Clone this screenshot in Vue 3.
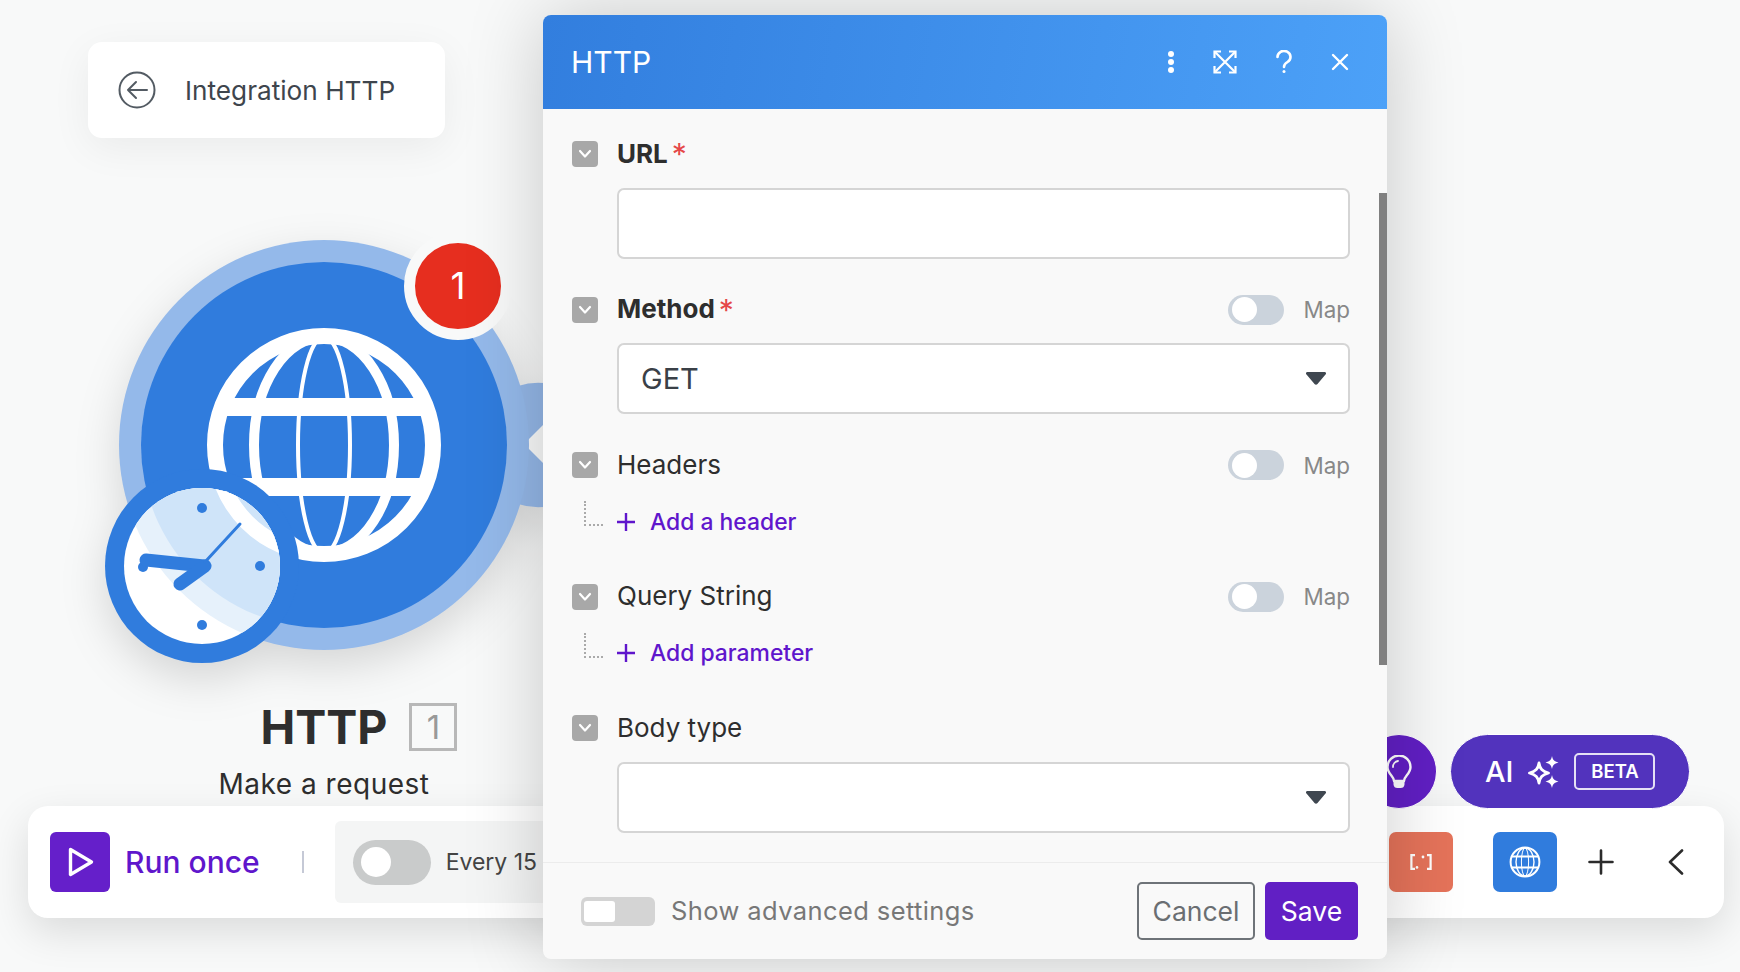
<script setup>
const fields = [
  { name: "URL", required: true, control: "input" },
  { name: "Method", required: true, map: true, control: "select", value: "GET" },
  { name: "Headers", map: true, add: "Add a header" },
  { name: "Query String", map: true, add: "Add parameter" },
  { name: "Body type", control: "select", value: "" },
];
</script>

<template>
  <div class="stage">
    <!-- canvas side -->
    <div class="back-card">
      <svg class="back-icon" width="38" height="38" viewBox="0 0 38 38" fill="none" stroke="#535b63" stroke-width="2">
        <circle cx="19" cy="19" r="17.5" />
        <path d="M29 19H10M18 11l-8 8 8 8" stroke-linecap="round" stroke-linejoin="round" />
      </svg>
      <span>Integration HTTP</span>
    </div>

    <div class="node">
      <div class="node-art">
        <svg width="456" height="450" viewBox="95 230 456 450">
          <defs>
            <g id="globe" fill="none" stroke="#fff">
              <circle cx="324" cy="445" r="109" stroke-width="16" />
              <ellipse cx="324" cy="445" rx="26" ry="108" stroke-width="4" />
              <ellipse cx="324" cy="445" rx="70" ry="108" stroke-width="10" />
              <rect x="224" y="398" width="200" height="18" fill="#fff" stroke="none" />
              <rect x="224" y="478" width="200" height="18" fill="#fff" stroke="none" />
            </g>
            <clipPath id="face">
              <circle cx="202" cy="566" r="78" />
            </clipPath>
          </defs>
          <path d="M518 386a64 64 0 0 1 40 0v118a64 64 0 0 1-40 0z" fill="#93b6e6" />
          <path d="M524 444l24-24v48z" fill="#f8f9f9" />
          <circle cx="324" cy="445" r="205" fill="#94b9ea" />
          <circle cx="324" cy="445" r="183" fill="#307cdd" />
          <use href="#globe" />
          <circle cx="202" cy="566" r="97" fill="#307cdd" />
          <circle cx="202" cy="566" r="78" fill="#fff" />
          <g clip-path="url(#face)">
            <circle cx="324" cy="445" r="205" fill="#e6f1fb" />
            <circle cx="324" cy="445" r="183" fill="#cfe4f9" />
            <use href="#globe" />
          </g>
          <g fill="#307cdd">
            <circle cx="202" cy="508" r="5" />
            <circle cx="260" cy="566" r="5" />
            <circle cx="202" cy="625" r="5" />
            <circle cx="143" cy="567" r="5" />
          </g>
          <g fill="none" stroke="#307cdd" stroke-linecap="round">
            <path d="M146 560L204 566" stroke-width="13" />
            <path d="M180 584L205 566" stroke-width="13" />
            <path d="M205 562L240 524" stroke-width="3" />
          </g>
        </svg>
        <div class="badge">1</div>
      </div>
      <div class="node-title">
        <span class="node-name">HTTP</span>
        <span class="node-id">1</span>
      </div>
      <div class="node-sub">Make a request</div>
    </div>

    <div class="bar">
      <div class="play">
        <svg width="26" height="30" viewBox="0 0 26 30" fill="none" stroke="#fff" stroke-width="3.4" stroke-linejoin="round">
          <path d="M2.500 2.500L23.500 15 2.500 27.500z" />
        </svg>
      </div>
      <span class="run-once">Run once</span>
      <i class="bar-divider"></i>
      <div class="schedule">
        <span class="schedule-toggle"><i></i></span>
        <span>Every 15</span>
      </div>
      <div class="bar-right">
        <div class="square orange">
          <svg width="22" height="16" viewBox="0 0 22 16" fill="none" stroke="#fff" stroke-width="2.2">
            <path d="M5 1.200H1.400v13.600H5M17 1.200h3.600v13.600H17" />
            <circle cx="7" cy="13.400" r="1.300" fill="#fff" stroke="none" />
            <circle cx="13" cy="3" r="1.400" fill="#fff" stroke="none" />
          </svg>
        </div>
        <div class="square blue">
          <svg width="32" height="32" viewBox="0 0 32 32" fill="none" stroke="#fff">
            <circle cx="16" cy="16" r="14.400" stroke-width="2" />
            <ellipse cx="16" cy="16" rx="3.600" ry="14" stroke-width="1" />
            <ellipse cx="16" cy="16" rx="9" ry="14" stroke-width="1.400" />
            <path d="M3 10.500h26M3 21.500h26" stroke-width="2" />
          </svg>
        </div>
        <svg class="plus" width="26" height="26" viewBox="0 0 26 26" fill="none" stroke="#2b2b2b" stroke-width="2.6" stroke-linecap="round">
          <path d="M13 1.500v23M1.500 13h23" />
        </svg>
        <svg class="chevron" width="16" height="26" viewBox="0 0 16 26" fill="none" stroke="#2b2b2b" stroke-width="2.6" stroke-linecap="round" stroke-linejoin="round">
          <path d="M14 1.500L2 13l12 11.500" />
        </svg>
      </div>
    </div>

    <!-- floating buttons above the bar -->
    <div class="tip">
      <svg width="26" height="34" viewBox="0 0 26 34" fill="none" stroke="#fff" stroke-width="2.4" stroke-linejoin="round">
        <path d="M8 26c0-5-6.500-7-6.500-14a11.500 11.500 0 0 1 23 0c0 7-6.500 9-6.500 14z" />
        <path d="M7 12a6 6 0 0 1 5-6" stroke-width="1.8" stroke-linecap="round" />
        <path d="M7.500 27h11v2.500a4 4 0 0 1-4 3.500h-3a4 4 0 0 1-4-3.500z" fill="#fff" stroke="none" />
      </svg>
    </div>
    <div class="ai">
      <span class="ai-text">AI</span>
      <svg width="32" height="32" viewBox="0 0 32 32" fill="#fff">
        <path d="M12 7C13 13 15 15 21.500 17 15 19 13 21 12 27 11 21 9 19 2.500 17 9 15 11 13 12 7z" fill="none" stroke="#fff" stroke-width="2.800" stroke-linejoin="round" />
        <path d="M25 0c.7 3.800 2.200 5.300 6.500 6.500-4.300 1.200-5.800 2.700-6.500 6.500-.7-3.800-2.200-5.300-6.500-6.500 4.300-1.200 5.800-2.700 6.500-6.500z" />
        <path d="M25 19c.7 3.800 2.200 5.300 6.500 6.500-4.300 1.200-5.800 2.700-6.500 6.500-.7-3.800-2.200-5.300-6.500-6.500 4.300-1.200 5.800-2.700 6.500-6.500z" />
      </svg>
      <span class="beta">BETA</span>
    </div>

    <!-- module settings dialog -->
    <div class="dialog">
      <div class="dialog-head">
        <span class="dialog-title">HTTP</span>
        <div class="head-icons">
          <svg class="head-dots" width="8" height="24" viewBox="0 0 8 24" fill="#fff">
            <circle cx="4" cy="4" r="3" />
            <circle cx="4" cy="12" r="3" />
            <circle cx="4" cy="20" r="3" />
          </svg>
          <svg width="24" height="24" viewBox="0 0 24 24" fill="none" stroke="#fff" stroke-width="2.200">
            <path d="M1.500 8V1.500H8M16 1.500h6.500V8M22.500 16v6.500H16M8 22.500H1.500V16" />
            <path d="M2 2l20 20M22 2L2 22" />
          </svg>
          <svg width="16" height="24" viewBox="0 0 16 24" fill="none" stroke="#fff" stroke-width="2.600" stroke-linecap="round">
            <path d="M1.500 7a6.500 6 0 1 1 10 5c-2.500 1.500-3.500 2.500-3.500 5" />
            <circle cx="8" cy="21.500" r="1.500" fill="#fff" stroke="none" />
          </svg>
          <svg width="18" height="18" viewBox="0 0 18 18" fill="none" stroke="#fff" stroke-width="2.400" stroke-linecap="round">
            <path d="M2 2l14 14M16 2L2 16" />
          </svg>
        </div>
      </div>

      <div class="dialog-body">
        <div v-for="field in fields" :key="field.name" class="field" :class="{ 'has-add': field.add }">
          <div class="field-row">
            <span class="check">
              <svg width="14" height="10" viewBox="0 0 14 10" fill="none" stroke="#fff" stroke-width="2.200" stroke-linecap="round" stroke-linejoin="round">
                <path d="M2 2l5 5.500L12 2" />
              </svg>
            </span>
            <label :class="{ strong: field.required }">{{ field.name }}</label>
            <span v-if="field.required" class="star">*</span>
            <div v-if="field.map" class="map">
              <span class="map-toggle"><i></i></span>
              <span>Map</span>
            </div>
          </div>
          <div v-if="field.control" class="control">
            <span v-if="field.value" class="control-value">{{ field.value }}</span>
            <svg v-if="field.control === 'select'" class="caret" width="20" height="13" viewBox="0 0 20 13" fill="#3f4750">
              <path d="M2 0h16c2 0 2.600 1.300 1.500 2.600L11.500 12c-.8 1-2.200 1-3 0L.5 2.600C-.6 1.300 0 0 2 0z" />
            </svg>
          </div>
          <div v-if="field.add" class="add-row">
            <i class="connector"></i>
            <svg width="18" height="18" viewBox="0 0 18 18" fill="none" stroke="#5f16cc" stroke-width="2.400">
              <path d="M9 0v18M0 9h18" />
            </svg>
            <span class="add-text">{{ field.add }}</span>
          </div>
        </div>
        <i class="scrollbar"></i>
      </div>

      <div class="dialog-foot">
        <span class="adv-toggle"><i></i></span>
        <span class="adv-label">Show advanced settings</span>
        <button class="btn cancel">Cancel</button>
        <button class="btn save">Save</button>
      </div>
    </div>
  </div>
</template>

<style>
html,
body {
  margin: 0;
  background: #f8f9f9;
}
</style>

<style scoped>
.stage {
  position: relative;
  width: 1740px;
  height: 972px;
  box-sizing: border-box;
  padding: 42px 16px 0 28px;
  overflow: hidden;
  background: #f8f9f9;
  font-family: Inter, "Liberation Sans", sans-serif;
  color: #2e2e2e;
}

.back-card {
  display: flex;
  align-items: center;
  box-sizing: border-box;
  width: 357px;
  height: 96px;
  margin-left: 60px;
  padding-left: 30px;
  background: #fff;
  border-radius: 14px;
  box-shadow: 0 10px 40px rgba(0, 0, 0, 0.06);
  font-size: 26.200px;
  color: #3e454d;
}
.back-icon {
  margin-right: 29px;
}

.node {
  width: 456px;
  margin: 92px 0 0 67px;
  text-align: center;
}
.node-art {
  position: relative;
  height: 450px;
}
.node-art svg {
  display: block;
  filter: drop-shadow(0 16px 22px rgba(0, 0, 0, 0.14));
}
.badge {
  position: absolute;
  left: 309px;
  top: 2px;
  width: 86px;
  height: 86px;
  border: 11px solid #f8f9f9;
  border-radius: 50%;
  background: #e62e1f;
  color: #fff;
  font-size: 37px;
  line-height: 86px;
}
.node-title {
  display: flex;
  justify-content: center;
  align-items: center;
  gap: 22px;
  height: 50px;
  margin-top: 22px;
  padding-left: 72px;
}
.node-name {
  font-size: 46.500px;
  font-weight: 700;
  line-height: 50px;
}
.node-id {
  box-sizing: border-box;
  width: 48px;
  height: 48px;
  border: 3px solid #b8b8b8;
  color: #999;
  font-size: 33px;
  line-height: 42px;
}
.node-sub {
  margin-top: 14px;
  padding-left: 2px;
  font-size: 28px;
  line-height: 36px;
  letter-spacing: 0.5px;
}

.bar {
  position: absolute;
  left: 28px;
  top: 806px;
  display: flex;
  align-items: center;
  box-sizing: border-box;
  width: 1696px;
  height: 112px;
  padding: 0 40px 0 22px;
  background: #fff;
  border-radius: 20px;
  box-shadow: 0 14px 40px rgba(0, 0, 0, 0.12);
}
.play {
  display: flex;
  align-items: center;
  justify-content: center;
  width: 60px;
  height: 60px;
  padding-left: 2px;
  box-sizing: border-box;
  background: #651fca;
  border-radius: 6px;
}
.run-once {
  margin-left: 15px;
  font-size: 30px;
  font-weight: 500;
  color: #5f16cc;
}
.bar-divider {
  width: 2px;
  height: 22px;
  margin: 0 31px 0 42px;
  background: #c5c9d6;
}
.schedule {
  display: flex;
  align-items: center;
  box-sizing: border-box;
  width: 240px;
  height: 82px;
  padding-left: 18px;
  background: #f4f5f5;
  border-radius: 6px;
  font-size: 23px;
  color: #444;
}
.schedule-toggle {
  display: flex;
  align-items: center;
  box-sizing: border-box;
  width: 78px;
  height: 45px;
  margin-right: 15px;
  padding-left: 8px;
  background: #c9cbcb;
  border-radius: 23px;
}
.schedule-toggle i {
  width: 30px;
  height: 30px;
  background: #fff;
  border-radius: 50%;
}
.bar-right {
  display: flex;
  align-items: center;
  margin-left: auto;
}
.square {
  display: flex;
  align-items: center;
  justify-content: center;
  width: 64px;
  height: 60px;
  border-radius: 7px;
}
.orange {
  background: #e5735a;
}
.blue {
  margin-left: 40px;
  background: #307cdd;
}
.plus {
  margin-left: 31px;
}
.chevron {
  margin-left: 54px;
}

.tip {
  position: absolute;
  left: 1361px;
  top: 734px;
  display: flex;
  align-items: center;
  justify-content: center;
  box-sizing: border-box;
  width: 76px;
  height: 75px;
  background: #611fc4;
  border: 1px solid #fff;
  border-radius: 50%;
}
.ai {
  position: absolute;
  left: 1450px;
  top: 734px;
  display: flex;
  align-items: center;
  box-sizing: border-box;
  width: 240px;
  height: 75px;
  padding-left: 34px;
  background: #5233bd;
  border: 1px solid #fff;
  border-radius: 38px;
  color: #fff;
}
.ai-text {
  margin-right: 14px;
  font-size: 29px;
  font-weight: 500;
}
.beta {
  box-sizing: border-box;
  width: 81px;
  height: 37px;
  margin-left: 15px;
  border: 2px solid rgba(255, 255, 255, 0.85);
  border-radius: 5px;
  font-size: 18.500px;
  font-weight: 600;
  line-height: 33px;
  text-align: center;
}

.dialog {
  position: absolute;
  left: 543px;
  top: 15px;
  display: flex;
  flex-direction: column;
  width: 844px;
  height: 944px;
  background: #f9f9f9;
  border-radius: 8px;
  box-shadow: 0 0 80px rgba(0, 0, 0, 0.2);
  overflow: hidden;
}
.dialog-head {
  flex: none;
  display: flex;
  align-items: center;
  justify-content: space-between;
  box-sizing: border-box;
  height: 94px;
  padding: 0 38px 0 28px;
  background: linear-gradient(100deg, #327ede, #4ca1f8);
  color: #fff;
}
.dialog-title {
  font-size: 30px;
}
.head-icons {
  display: flex;
  align-items: center;
  gap: 39px;
}
.head-icons svg {
  display: block;
}
.head-dots {
  margin-right: -1px;
}

.dialog-body {
  position: relative;
  flex: 1;
  min-height: 0;
  padding: 30px 37px 0 29px;
}
.field {
  margin-bottom: 36px;
}
.field.has-add {
  margin-bottom: 45px;
}
.field-row {
  display: flex;
  align-items: center;
  height: 30px;
  font-size: 26px;
}
.field-row label {
  margin-top: -2px;
}
.check {
  display: flex;
  align-items: center;
  justify-content: center;
  width: 26px;
  height: 26px;
  margin-right: 19px;
  background: #a8a8a8;
  border-radius: 4px;
}
.strong {
  font-weight: 700;
  font-size: 26px;
}
.star {
  margin: 0 0 0 4px;
  color: #e54848;
  font-size: 30px;
  line-height: 30px;
}
.map {
  display: flex;
  align-items: center;
  margin-left: auto;
  color: #888;
  font-size: 22.400px;
}
.map-toggle {
  display: flex;
  align-items: center;
  box-sizing: border-box;
  width: 56px;
  height: 30px;
  margin-right: 19px;
  padding-left: 4px;
  background: #cbd3dc;
  border-radius: 15px;
}
.map-toggle i {
  width: 25px;
  height: 25px;
  background: #fff;
  border-radius: 50%;
}
.control {
  display: flex;
  align-items: center;
  justify-content: space-between;
  box-sizing: border-box;
  height: 71px;
  margin: 18.500px 0 0 45px;
  padding: 0 22px 0 22px;
  background: #fff;
  border: 2px solid #d5d5d5;
  border-radius: 7px;
  font-size: 29px;
  color: #3a4047;
}
.caret {
  margin-left: auto;
}
.add-row {
  display: flex;
  align-items: center;
  height: 30px;
  margin-top: 26.500px;
}
.connector {
  box-sizing: border-box;
  width: 19px;
  height: 25px;
  margin: -16px 14px 0 12px;
  border-left: 2px dotted #aaa;
  border-bottom: 2px dotted #aaa;
}
.add-text {
  margin-left: 15px;
  color: #5f16cc;
  font-size: 22.900px;
  font-weight: 500;
}
.scrollbar {
  position: absolute;
  right: 0;
  top: 84px;
  width: 8px;
  height: 472px;
  background: #808080;
}

.dialog-foot {
  flex: none;
  display: flex;
  align-items: center;
  box-sizing: border-box;
  height: 97px;
  padding: 0 29px 0 38px;
  border-top: 1px solid #ececec;
}
.adv-toggle {
  display: flex;
  align-items: center;
  box-sizing: border-box;
  width: 74px;
  height: 29px;
  padding-left: 3px;
  background: #d4d4d4;
  border-radius: 6px;
}
.adv-toggle i {
  width: 31px;
  height: 21px;
  background: #fff;
  border-radius: 3px;
}
.adv-label {
  margin: -2px 0 0 16px;
  color: #777;
  font-size: 25.500px;
  letter-spacing: 0.4px;
}
.btn {
  box-sizing: border-box;
  height: 58px;
  border-radius: 5px;
  font-family: inherit;
  font-size: 26.500px;
}
.cancel {
  width: 118px;
  margin-left: auto;
  background: transparent;
  border: 2px solid #6e7378;
  color: #6a6e72;
}
.save {
  width: 93px;
  margin-left: 10px;
  background: #611fc4;
  border: 0;
  color: #fff;
}
</style>
